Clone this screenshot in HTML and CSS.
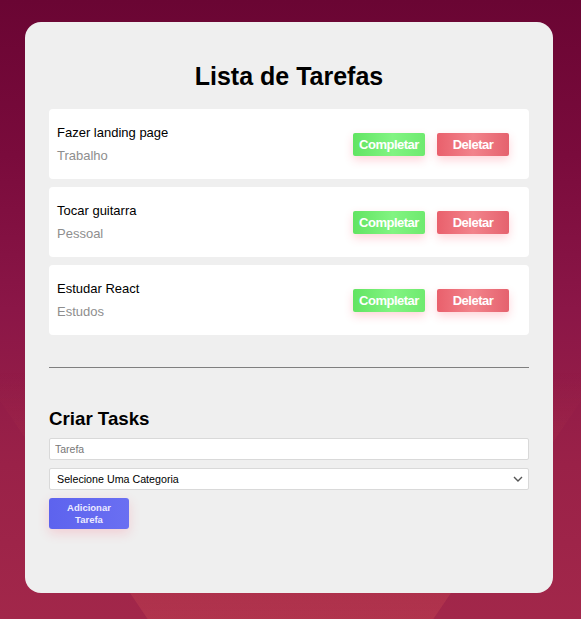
FILE: index.html
```html
<!DOCTYPE html>
<html lang="pt-BR">
<head>
<meta charset="utf-8">
<title>Lista de Tarefas</title>
<link rel="stylesheet" href="styles.css">
</head>
<body>
<main class="card">
  <h1 class="title">Lista de Tarefas</h1>
  <ul class="tasks">
    <li class="task">
      <div class="task-info">
        <span class="task-name">Fazer landing page</span>
        <span class="task-cat">Trabalho</span>
      </div>
      <div class="task-actions">
        <button class="btn btn-complete">Completar</button>
        <button class="btn btn-delete">Deletar</button>
      </div>
    </li>
    <li class="task">
      <div class="task-info">
        <span class="task-name">Tocar guitarra</span>
        <span class="task-cat">Pessoal</span>
      </div>
      <div class="task-actions">
        <button class="btn btn-complete">Completar</button>
        <button class="btn btn-delete">Deletar</button>
      </div>
    </li>
    <li class="task">
      <div class="task-info">
        <span class="task-name">Estudar React</span>
        <span class="task-cat">Estudos</span>
      </div>
      <div class="task-actions">
        <button class="btn btn-complete">Completar</button>
        <button class="btn btn-delete">Deletar</button>
      </div>
    </li>
  </ul>
  <hr class="divider">
  <h3 class="form-title">Criar Tasks</h3>
  <form class="form">
    <input class="field" type="text" placeholder="Tarefa">
    <div class="select-wrap">
      <select class="field select">
        <option>Selecione Uma Categoria</option>
      </select>
      <svg class="chevron" width="10" height="6" viewBox="0 0 10 6"><path d="M1 1 L5 5 L9 1" fill="none" stroke="#555" stroke-width="1.4"/></svg>
    </div>
    <button type="button" class="btn-add">Adicionar Tarefa</button>
  </form>
</main>
</body>
</html>
```
FILE: styles.css
```css
html, body {
  margin: 0;
  padding: 0;
}
body {
  min-height: 100vh;
  font-family: "Liberation Sans", Arial, sans-serif;
  background: linear-gradient(180deg, #6a0533 0%, #7a0b3c 25%, #8b1647 50%, #9a2148 75%, #a2274a 100%);
  padding: 22px 0 26px 25px;
  box-sizing: border-box;
}
body::before {
  content: "";
  position: fixed;
  inset: 0;
  z-index: -1;
  clip-path: polygon(0 0, 100% 0, 100% 401px, 50% 830px, 0 401px);
  background: linear-gradient(180deg, rgba(210, 80, 80, 0) 0%, rgba(210, 80, 80, 0) 60%, rgba(215, 85, 85, 0.28) 100%);
}
.card {
  width: 528px;
  box-sizing: border-box;
  background: #efefef;
  border-radius: 16px;
  padding: 24px 24px 64px;
}
.title {
  margin: 16px 0 18px;
  text-align: center;
  font-size: 25px;
  line-height: 29px;
  font-weight: 700;
  color: #000;
}
.tasks {
  list-style: none;
  margin: 0;
  padding: 0;
  display: flex;
  flex-direction: column;
  gap: 8px;
}
.task {
  background: #fff;
  border-radius: 4px;
  height: 70px;
  box-sizing: border-box;
  padding: 16px 20px 16px 8px;
  display: flex;
  align-items: center;
  justify-content: space-between;
}
.task-info {
  display: flex;
  flex-direction: column;
  gap: 8px;
  font-size: 13px;
  line-height: 15px;
}
.task-name { color: #000; }
.task-cat { color: #8e8e8e; }
.task-actions {
  display: flex;
  gap: 12px;
}
.btn {
  width: 72px;
  height: 23px;
  border: none;
  border-radius: 2px;
  color: #fff;
  font-family: "Liberation Sans", Arial, sans-serif;
  font-weight: 700;
  font-size: 13px;
  letter-spacing: -0.5px;
  padding: 0;
  box-shadow: 0 4px 10px rgba(255, 60, 80, 0.22);
}
.btn-complete {
  background: linear-gradient(90deg, #62e462 0%, #82f482 55%, #6fea6f 100%);
}
.btn-delete {
  background: linear-gradient(90deg, #e9606c 0%, #f2838b 50%, #e5626e 100%);
}
.divider {
  margin: 32px 0 0;
  border: none;
  border-top: 1px solid #7f7f7f;
  height: 0;
}
.form-title {
  margin: 40px 0 8px;
  font-size: 18.72px;
  line-height: 22px;
  font-weight: 700;
  color: #000;
}
.form {
  display: flex;
  flex-direction: column;
  align-items: flex-start;
  gap: 8px;
}
.field {
  width: 100%;
  height: 22px;
  box-sizing: border-box;
  border: 1px solid #d9d9d9;
  border-radius: 2px;
  background: #fff;
  font-family: "Liberation Sans", Arial, sans-serif;
  font-size: 10.5px;
  padding: 0 5px;
  margin: 0;
  outline: none;
}
.field::placeholder { color: #777; }
.select-wrap {
  position: relative;
  width: 100%;
}
.select {
  appearance: none;
  -webkit-appearance: none;
  color: #000;
  font-size: 10.7px;
  padding: 0 7px;
}
.chevron {
  position: absolute;
  right: 6px;
  top: 8px;
  pointer-events: none;
}
.btn-add {
  width: 80px;
  height: 31px;
  border: none;
  border-radius: 3px;
  padding: 0 8px;
  background: linear-gradient(90deg, #5d63ee 0%, #6a6ff2 100%);
  color: #eceaff;
  font-family: "Liberation Sans", Arial, sans-serif;
  font-weight: 700;
  font-size: 9.5px;
  line-height: 12px;
  box-shadow: 0 4px 12px rgba(255, 70, 100, 0.2);
}
```
